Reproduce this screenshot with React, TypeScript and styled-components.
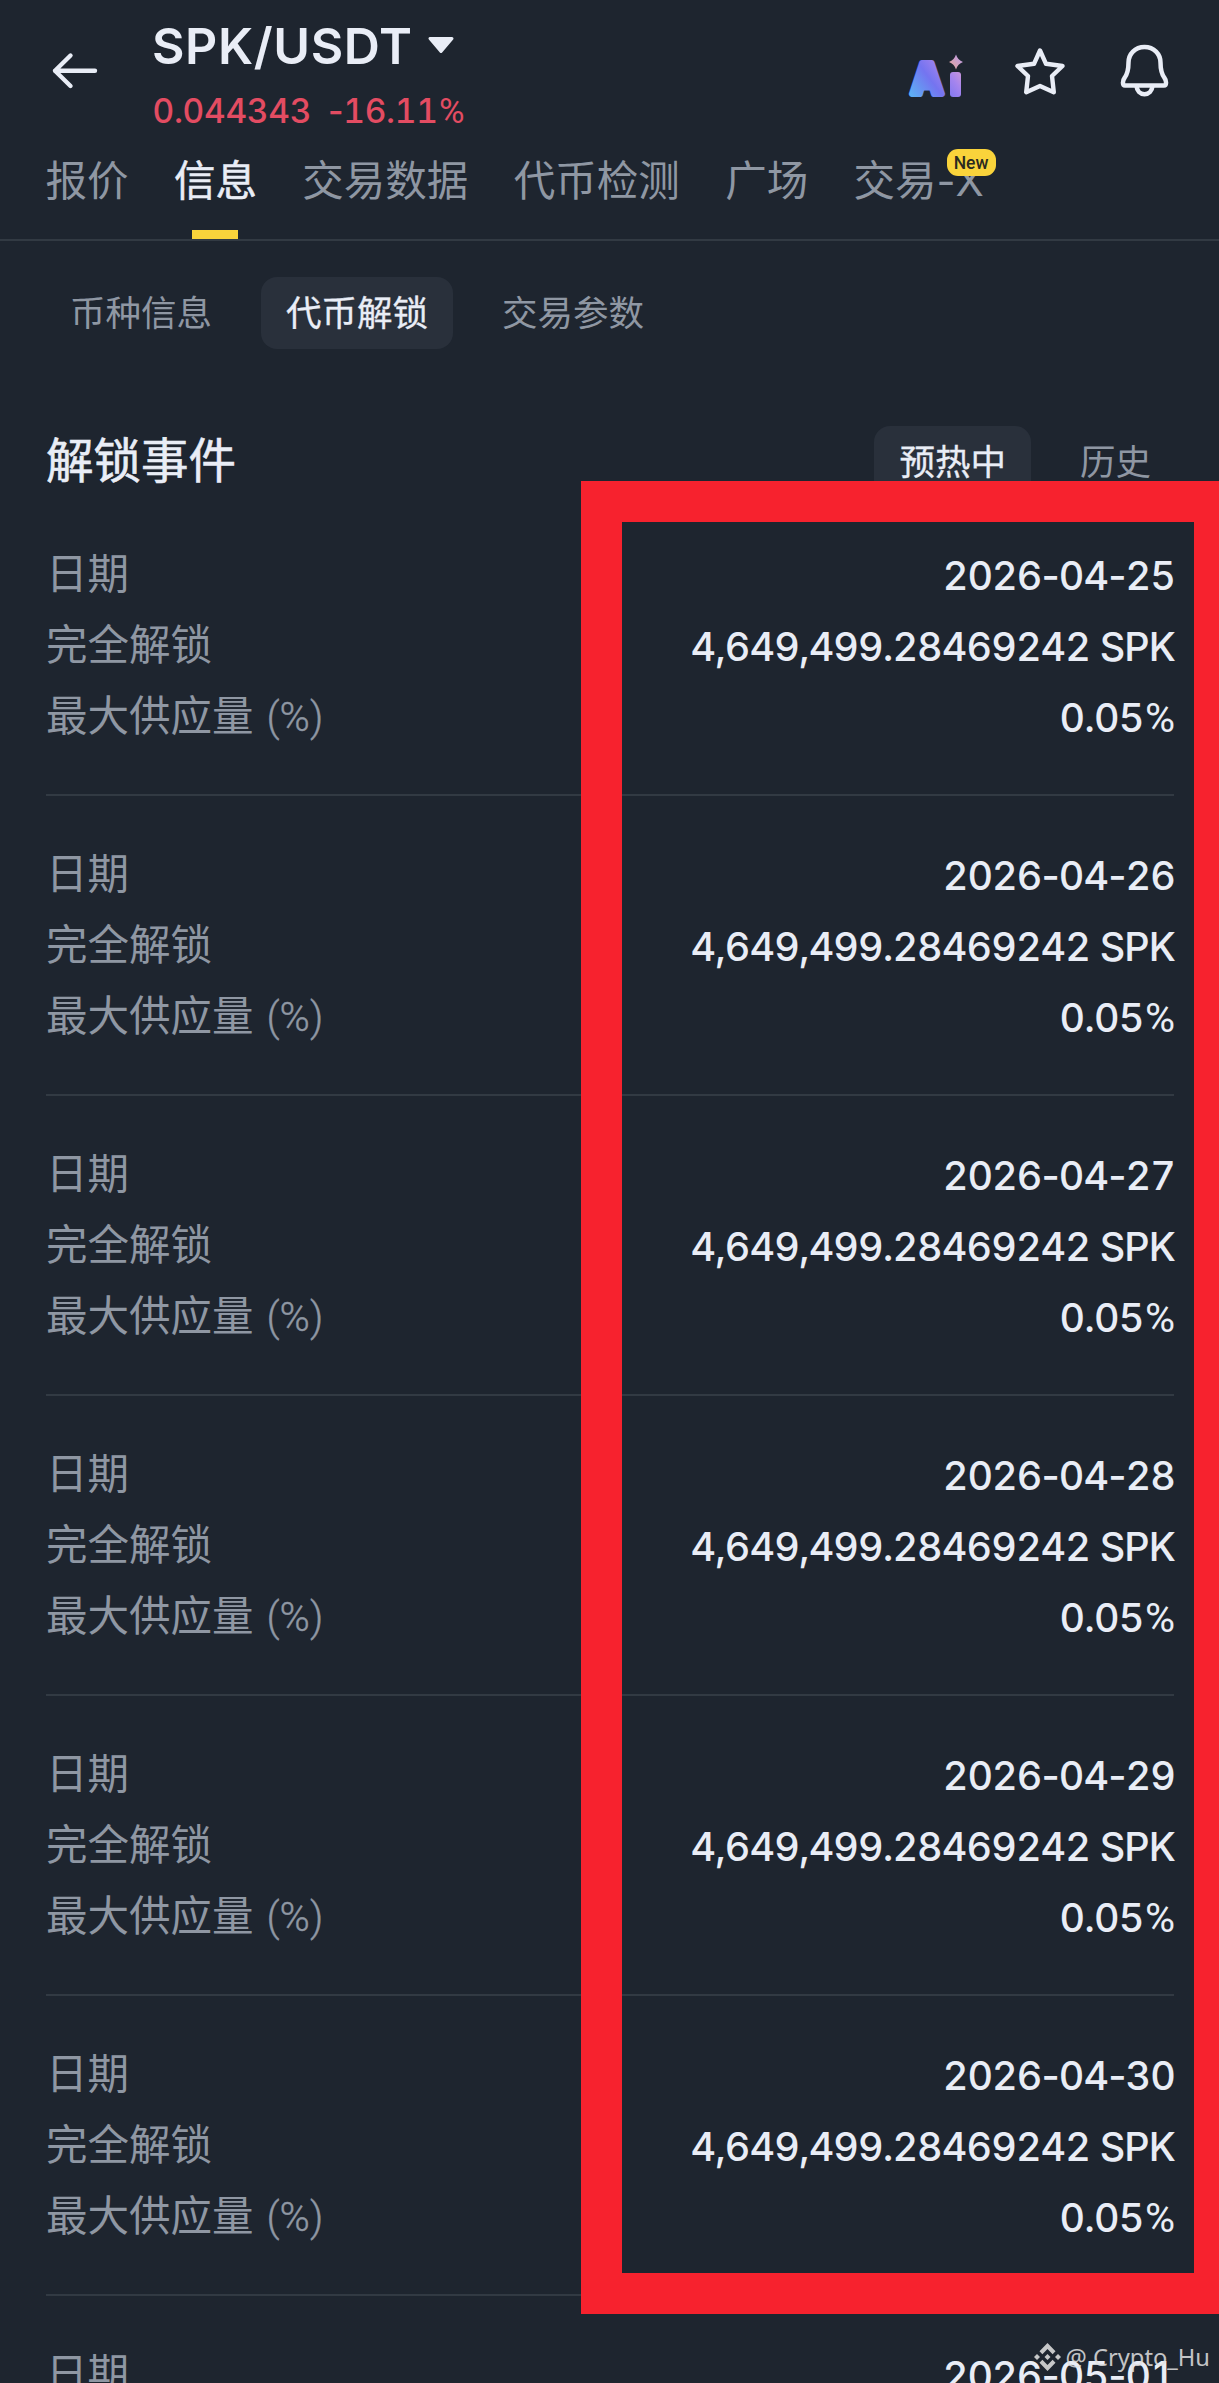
import React from "react";
import styled, { createGlobalStyle } from "styled-components";

const color = {
  bg: "#1e252f",
  chip: "#29303b",
  line: "#323a43",
  text: "#e9edf6",
  muted: "#8f97a3",
  down: "#e34c62",
  accent: "#f9d33b",
  frame: "#f7222e",
};

const GlobalStyle = createGlobalStyle`
  *, *::before, *::after { box-sizing: border-box; }
  body {
    margin: 0;
    background: ${color.bg};
    color: ${color.text};
    font-family: Inter, "Noto Sans CJK SC", sans-serif;
  }
`;

const Screen = styled.main`
  position: relative;
  width: 1219px;
  height: 2383px;
  overflow: hidden;
  background: ${color.bg};
`;

const Header = styled.header`
  display: flex;
  justify-content: space-between;
  height: 144px;
  padding: 0 44px 0 46px;
`;

const Pair = styled.div`
  display: flex;
  gap: 54px;
`;

const BackIcon = styled.svg`
  width: 54px;
  height: 44px;
  margin: 49px 0 0 0;
`;

const PairText = styled.div`
  display: flex;
  flex-direction: column;
  white-space: nowrap;
`;

const Symbol = styled.h1`
  display: flex;
  align-items: center;
  gap: 14px;
  height: 60px;
  margin: 16px 0 0 -2px;
  font-size: 50px;
  font-weight: 600;
  line-height: 60px;
  letter-spacing: 0.6px;
`;

const Caret = styled.svg`
  width: 28px;
  height: 18px;
  margin-top: -2px;
`;

const Price = styled.div`
  display: flex;
  gap: 17px;
  margin: 15px 0 0 -1.5px;
  color: ${color.down};
  font-size: 33.5px;
  font-weight: 500;
  font-variant-numeric: tabular-nums;
  line-height: 40px;
  letter-spacing: -0.3px;
`;

const Dash = styled.span`
  font-variant-numeric: normal;
`;

const Percent = styled.span`
  margin-left: 1.5px;
  font-family: Roboto, sans-serif;
  font-size: 1.04em;
  font-weight: 400;
  letter-spacing: 0;
`;

const Actions = styled.div`
  display: flex;
`;

const ActionIcon = styled.svg<{ $left: number }>`
  width: 60px;
  height: 60px;
  margin: 40px 0 0 ${(p) => p.$left}px;
  overflow: visible;
`;

const LogoLetter = styled.text`
  font-family: Inter, sans-serif;
  font-size: 42px;
  font-weight: 800;
`;

const Tabs = styled.nav`
  display: flex;
  gap: 45.4px;
  height: 97px;
  padding-left: 45.5px;
  border-bottom: 2px solid ${color.line};
`;

const Tab = styled.div<{ $active?: boolean }>`
  position: relative;
  height: 95px;
  color: ${(p) => (p.$active ? color.text : color.muted)};
  font-size: 41.5px;
  line-height: 75px;
  white-space: nowrap;
  -webkit-text-stroke: ${(p) => (p.$active ? "0.5px" : "0")};

  &::after {
    content: "";
    display: ${(p) => (p.$active ? "block" : "none")};
    position: absolute;
    left: 50%;
    bottom: 0;
    width: 46px;
    height: 9px;
    margin-left: -23px;
    background: ${color.accent};
  }
`;

const NewBadge = styled.span`
  position: absolute;
  top: 5px;
  left: 93px;
  width: 49px;
  height: 27px;
  border-radius: 11px;
  background: ${color.accent};
  color: #2a2a20;
  font-family: Roboto, sans-serif;
  font-size: 17.5px;
  font-weight: 500;
  line-height: 28px;
  text-align: center;
`;

const Chips = styled.div`
  display: flex;
  gap: 24px;
`;

const SubNav = styled(Chips)`
  padding: 36px 45px 0;
`;

const Chip = styled.div<{ $active?: boolean }>`
  height: 72px;
  padding: 0 25px;
  border-radius: 16px;
  background: ${(p) => (p.$active ? color.chip : "transparent")};
  color: ${(p) => (p.$active ? color.text : color.muted)};
  font-size: 35.5px;
  line-height: 73px;
  white-space: nowrap;
  -webkit-text-stroke: ${(p) => (p.$active ? "0.3px" : "0")};
`;

const SectionHead = styled.div`
  display: flex;
  justify-content: space-between;
  height: 72px;
  margin-top: 77px;
  padding: 0 43px 0 46px;
`;

const SectionTitle = styled.h2`
  margin: 0;
  font-size: 47.5px;
  font-weight: 400;
  line-height: 70px;
  -webkit-text-stroke: 0.6px;
`;

const Events = styled.section`
  padding: 0 45px 0 46px;
  margin-top: 39px;
`;

const Event = styled.article`
  height: 300px;
  padding-top: 43px;
  border-bottom: 2px solid ${color.line};

  &:first-child {
    height: 259px;
    padding-top: 2px;
  }
`;

const Row = styled.div`
  display: flex;
  justify-content: space-between;
  height: 71px;
  line-height: 71px;
  white-space: nowrap;
`;

const Label = styled.span`
  color: ${color.muted};
  font-size: 41.5px;
`;

const Unit = styled.span`
  margin-left: 3px;
  font-family: Roboto, sans-serif;
  font-size: 41px;
  font-weight: 300;
  -webkit-text-stroke: 0.4px;
`;

const Value = styled.span`
  margin: 2px -1px 0 0;
  color: ${color.text};
  font-size: 39.5px;
  font-weight: 500;
  font-variant-numeric: tabular-nums;
  letter-spacing: -0.9px;
`;

const Highlight = styled.div`
  position: absolute;
  top: 481px;
  left: 581px;
  width: 654px;
  height: 1833px;
  border: 41px solid ${color.frame};
`;

const Watermark = styled.div`
  position: absolute;
  right: 9px;
  bottom: 8px;
  display: flex;
  align-items: center;
  gap: 5px;
  color: rgba(226, 226, 226, 0.86);
  font-family: "Noto Sans", "Noto Sans CJK SC", sans-serif;
  font-size: 23.7px;
  line-height: 36px;
  white-space: nowrap;
`;

const tabs = ["报价", "信息", "交易数据", "代币检测", "广场", "交易-X"];
const chips = ["币种信息", "代币解锁", "交易参数"];
const dates = [
  "2026-04-25",
  "2026-04-26",
  "2026-04-27",
  "2026-04-28",
  "2026-04-29",
  "2026-04-30",
  "2026-05-01",
];

/* Digits keep equal widths while hyphens stay at their natural width. */
function Figures({ children }: { children: string }) {
  return (
    <>
      {children.split("-").map((part, i) => (
        <React.Fragment key={i}>
          {i > 0 && <Dash>-</Dash>}
          {part}
        </React.Fragment>
      ))}
    </>
  );
}

function AiLogo() {
  return (
    <ActionIcon $left={0} viewBox="0 0 60 60">
      <defs>
        <linearGradient id="ai" gradientUnits="userSpaceOnUse" x1="4" y1="56" x2="52" y2="20">
          <stop offset="0" stopColor="#5cb4f4" />
          <stop offset="0.45" stopColor="#7474f0" />
          <stop offset="0.75" stopColor="#a484ee" />
          <stop offset="1" stopColor="#d69cd4" />
        </linearGradient>
        <linearGradient id="spark" x1="0" y1="1" x2="1" y2="0">
          <stop offset="0" stopColor="#eaa894" />
          <stop offset="1" stopColor="#b79af2" />
        </linearGradient>
      </defs>
      <LogoLetter
        x="6"
        y="54"
        fill="url(#ai)"
        stroke="url(#ai)"
        strokeWidth="6"
        strokeLinejoin="round"
        textLength="32"
        lengthAdjust="spacingAndGlyphs"
      >
        A
      </LogoLetter>
      <rect x="45" y="32" width="11" height="25" rx="3" fill="url(#ai)" />
      <path d="M51 14.500 Q52.800 20.200 58 22 Q52.800 23.800 51 29.500 Q49.200 23.800 44 22 Q49.200 20.200 51 14.500Z" fill="url(#spark)" />
    </ActionIcon>
  );
}

function StarIcon() {
  return (
    <ActionIcon $left={45} viewBox="0 0 60 60" fill="none" stroke={color.text} strokeWidth="4.400" strokeLinejoin="round">
      <path d="M30 10.500 L36 23.800 L52.500 26 L42 36 L43.800 52.200 L30 46 L16.200 52.200 L18 36 L7.500 26 L24 23.800 Z" />
    </ActionIcon>
  );
}

function BellIcon() {
  return (
    <ActionIcon $left={45} viewBox="0 0 60 60" fill="none" stroke={color.text} strokeWidth="4.500" strokeLinejoin="round">
      <path d="M29.500 7 C20 7 13.500 14 13.500 22.500 C13.500 30 12.500 34 9.500 38 C7.500 40.500 7.200 45.500 10 45.500 H49 C51.800 45.500 51.500 40.500 49.500 38 C46.500 34 45.500 30 45.500 22.500 C45.500 14 39 7 29.500 7Z" />
      <path d="M21.500 46 C22 51 25 54.200 29.500 54.200 C34 54.200 37 51 37.500 46" />
    </ActionIcon>
  );
}

export default function App() {
  return (
    <Screen>
      <GlobalStyle />
      <Header>
        <Pair>
          <BackIcon
            viewBox="0 0 54 44"
            fill="none"
            stroke={color.text}
            strokeWidth="4.400"
            strokeLinecap="round"
            strokeLinejoin="round"
          >
            <path d="M49 21.700 H9 M24.500 6.500 L9 21.700 L24.500 37" />
          </BackIcon>
          <PairText>
            <Symbol>
              SPK/USDT
              <Caret viewBox="0 0 28 18">
                <path
                  d="M3 2.500 H25 L14 15.500 Z"
                  fill={color.text}
                  stroke={color.text}
                  strokeWidth="3"
                  strokeLinejoin="round"
                />
              </Caret>
            </Symbol>
            <Price>
              <span>0.044343</span>
              <span>
                <Figures>-16.11</Figures>
                <Percent>%</Percent>
              </span>
            </Price>
          </PairText>
        </Pair>
        <Actions>
          <AiLogo />
          <StarIcon />
          <BellIcon />
        </Actions>
      </Header>

      <Tabs>
        {tabs.map((name, i) => (
          <Tab key={name} $active={i === 1}>
            {name}
            {i === 5 && <NewBadge>New</NewBadge>}
          </Tab>
        ))}
      </Tabs>

      <SubNav>
        {chips.map((name, i) => (
          <Chip key={name} $active={i === 1}>
            {name}
          </Chip>
        ))}
      </SubNav>

      <SectionHead>
        <SectionTitle>解锁事件</SectionTitle>
        <Chips>
          <Chip $active>预热中</Chip>
          <Chip>历史</Chip>
        </Chips>
      </SectionHead>

      <Events>
        {dates.map((date) => (
          <Event key={date}>
            <Row>
              <Label>日期</Label>
              <Value>
                <Figures>{date}</Figures>
              </Value>
            </Row>
            <Row>
              <Label>完全解锁</Label>
              <Value>4,649,499.28469242 SPK</Value>
            </Row>
            <Row>
              <Label>
                最大供应量<Unit> (%)</Unit>
              </Label>
              <Value>
                0.05<Percent>%</Percent>
              </Value>
            </Row>
          </Event>
        ))}
      </Events>

      <Highlight />

      <Watermark>
        <svg width="27" height="28" viewBox="0 0 27 28" fill="currentColor">
          <path d="M13.500 0 L21.500 8.300 L18.600 11.300 L13.500 6 L8.400 11.300 L5.500 8.300Z" />
          <path d="M13.500 28 L21.500 19.700 L18.600 16.700 L13.500 22 L8.400 16.700 L5.500 19.700Z" />
          <path d="M13.500 10.900 L16.500 14 L13.500 17.100 L10.500 14Z" />
          <path d="M3 10.900 L6 14 L3 17.100 L0 14Z" />
          <path d="M24 10.900 L27 14 L24 17.100 L21 14Z" />
        </svg>
        <span>@ Crypto_Hu</span>
      </Watermark>
    </Screen>
  );
}
